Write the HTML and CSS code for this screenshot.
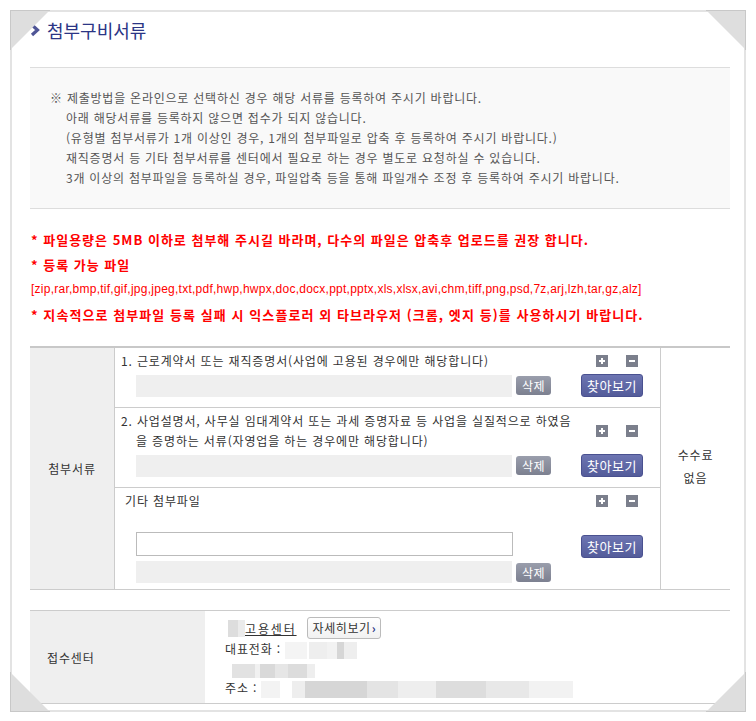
FILE: index.html
```html
<!DOCTYPE html>
<html lang="ko">
<head>
    <meta charset="UTF-8">
    <meta name="viewport" content="width=device-width, initial-scale=1.0">
    <title>첨부구비서류</title>
    <link rel="stylesheet" href="styles.css">
</head>
<body>
<div class="frame">
    <svg class="corner tl" width="40" height="40" viewBox="0 0 40 40"><polygon points="0,0 40,0 0,40" fill="#dedede"/><polyline points="0,40 0,0 40,0" fill="none" stroke="#c8c8c8" stroke-width="2"/></svg>
    <svg class="corner tr" width="40" height="40" viewBox="0 0 40 40"><polygon points="0,0 40,0 40,40" fill="#dedede"/><polyline points="0,0 40,0 40,40" fill="none" stroke="#c8c8c8" stroke-width="2"/></svg>
    <svg class="corner bl" width="40" height="40" viewBox="0 0 40 40"><polygon points="0,0 0,40 40,40" fill="#dedede"/><polyline points="0,0 0,40 40,40" fill="none" stroke="#c8c8c8" stroke-width="2"/></svg>
    <svg class="corner br" width="40" height="40" viewBox="0 0 40 40"><polygon points="40,0 40,40 0,40" fill="#dedede"/><polyline points="40,0 40,40 0,40" fill="none" stroke="#c8c8c8" stroke-width="2"/></svg>

    <h2 class="title">
        <svg class="chev" width="10" height="14" viewBox="0 0 10 14"><polyline points="2,2 7.5,7 2,12" fill="none" stroke="#4f5596" stroke-width="3.2"/></svg>
        첨부구비서류
    </h2>

    <div class="notice">
        <p>※ 제출방법을 온라인으로 선택하신 경우 해당 서류를 등록하여 주시기 바랍니다.</p>
        <p class="sub">아래 해당서류를 등록하지 않으면 접수가 되지 않습니다.</p>
        <p class="sub">(유형별 첨부서류가 1개 이상인 경우, 1개의 첨부파일로 압축 후 등록하여 주시기 바랍니다.)</p>
        <p class="sub">재직증명서 등 기타 첨부서류를 센터에서 필요로 하는 경우 별도로 요청하실 수 있습니다.</p>
        <p class="sub">3개 이상의 첨부파일을 등록하실 경우, 파일압축 등을 통해 파일개수 조정 후 등록하여 주시기 바랍니다.</p>
    </div>

    <div class="warn">
        <p>* 파일용량은 5MB 이하로 첨부해 주시길 바라며, 다수의 파일은 압축후 업로드를 권장 합니다.</p>
        <p>* 등록 가능 파일</p>
        <p class="ext">[zip,rar,bmp,tif,gif,jpg,jpeg,txt,pdf,hwp,hwpx,doc,docx,ppt,pptx,xls,xlsx,avi,chm,tiff,png,psd,7z,arj,lzh,tar,gz,alz]</p>
        <p class="last">* 지속적으로 첨부파일 등록 실패 시 익스플로러 외 타브라우저 (크롬, 엣지 등)를 사용하시기 바랍니다.</p>
    </div>

    <div class="att-table">
        <div class="th">첨부서류</div>
        <div class="docs">
            <div class="doc">
                <div class="doc-head">
                    <p class="doc-title">1. 근로계약서 또는 재직증명서(사업에 고용된 경우에만 해당합니다)</p>
                    <div class="pm">
                        <svg width="12" height="12" viewBox="0 0 12 12"><rect width="12" height="12" fill="#7b7f8c"/><rect x="3" y="5" width="6" height="2" fill="#fff"/><rect x="5" y="3" width="2" height="6" fill="#fff"/></svg>
                        <svg width="12" height="12" viewBox="0 0 12 12"><rect width="12" height="12" fill="#7b7f8c"/><rect x="3" y="5" width="6" height="2" fill="#fff"/></svg>
                    </div>
                </div>
                <div class="file-row">
                    <span class="file-bar"></span>
                    <button class="btn-del">삭제</button>
                    <button class="btn-find">찾아보기</button>
                </div>
            </div>
            <div class="doc">
                <div class="doc-head">
                    <p class="doc-title">2. 사업설명서, 사무실 임대계약서 또는 과세 증명자료 등 사업을 실질적으로 하였음<br>을 증명하는 서류(자영업을 하는 경우에만 해당합니다)</p>
                    <div class="pm">
                        <svg width="12" height="12" viewBox="0 0 12 12"><rect width="12" height="12" fill="#7b7f8c"/><rect x="3" y="5" width="6" height="2" fill="#fff"/><rect x="5" y="3" width="2" height="6" fill="#fff"/></svg>
                        <svg width="12" height="12" viewBox="0 0 12 12"><rect width="12" height="12" fill="#7b7f8c"/><rect x="3" y="5" width="6" height="2" fill="#fff"/></svg>
                    </div>
                </div>
                <div class="file-row">
                    <span class="file-bar"></span>
                    <button class="btn-del">삭제</button>
                    <button class="btn-find">찾아보기</button>
                </div>
            </div>
            <div class="doc doc-etc">
                <div class="doc-head">
                    <p class="doc-title">기타 첨부파일</p>
                    <div class="pm">
                        <svg width="12" height="12" viewBox="0 0 12 12"><rect width="12" height="12" fill="#7b7f8c"/><rect x="3" y="5" width="6" height="2" fill="#fff"/><rect x="5" y="3" width="2" height="6" fill="#fff"/></svg>
                        <svg width="12" height="12" viewBox="0 0 12 12"><rect width="12" height="12" fill="#7b7f8c"/><rect x="3" y="5" width="6" height="2" fill="#fff"/></svg>
                    </div>
                </div>
                <div class="file-row input-row">
                    <input type="text" class="file-input">
                    <button class="btn-find">찾아보기</button>
                </div>
                <div class="file-row bar-row">
                    <span class="file-bar"></span>
                    <button class="btn-del">삭제</button>
                </div>
            </div>
        </div>
        <div class="fee">수수료<br>없음</div>
    </div>

    <div class="center-table">
        <div class="th">접수센터</div>
        <div class="center-info">
            <div class="center-name">
                <span class="blur b-name"></span><a href="#" class="center-link">고용센터</a>
                <button class="btn-more">자세히보기<span class="arr">›</span></button>
            </div>
            <p>대표전화 : <span class="blur b-tel"></span></p>
            <p><span class="blur b-fax"></span></p>
            <p>주소 : <span class="blur b-addr"></span></p>
        </div>
    </div>
</div>
</body>
</html>
```

FILE: styles.css
```css
body { margin: 0; font-family: "Noto Sans CJK KR", "Noto Sans", sans-serif; font-size: 12px; color: #333; background: #fff; letter-spacing: 0.85px; }
p { margin: 0; }
.frame { position: relative; margin: 10px; width: 736px; border: 2px solid #e3e3e3; padding: 0 14px 6px 18px; box-sizing: border-box; }
.corner { position: absolute; }
.corner.tl { top: -2px; left: -2px; }
.corner.tr { top: -2px; right: -2px; }
.corner.bl { bottom: -2px; left: -2px; }
.corner.br { bottom: -2px; right: -2px; }

.title { margin: 0; padding-top: 7px; height: 22px; line-height: 22px; font-size: 18px; font-weight: normal; letter-spacing: 0; color: #2b3585; display: flex; align-items: center; gap: 7px; }
.chev { flex: none; }

.notice { margin-top: 26px; padding: 20px; background: #f9f9f9; border-top: 1px solid #ddd; border-bottom: 1px solid #ddd; color: #555; line-height: 20px; letter-spacing: 0.77px; }
.notice .sub { padding-left: 16px; }

.warn { margin-top: 18px; color: #f00; font-weight: bold; font-size: 13px; line-height: 25px; letter-spacing: 1px; padding-left: 1px; }
.warn .last { letter-spacing: 1.07px; }
.warn .ext { font-family: "Liberation Sans", "Noto Sans CJK KR", sans-serif; font-size: 12px; font-weight: normal; letter-spacing: 0.25px; }

.att-table { margin-top: 19px; display: grid; grid-template-columns: 85px minmax(0, 1fr) 70px; border-top: 2px solid #c8c8c8; border-bottom: 1px solid #ccc; }
.th { background: #efefef; display: flex; align-items: center; justify-content: center; }
.att-table .th { border-right: 1px solid #ccc; }
.fee { border-left: 1px solid #ccc; display: flex; align-items: center; justify-content: center; text-align: center; line-height: 23px; padding-bottom: 6px; }

.doc { padding: 3px 17px 10px 6px; border-bottom: 1px solid #ccc; line-height: 20px; }
.doc:last-child { border-bottom: none; padding-bottom: 6px; }
.doc-head { display: flex; align-items: center; }
.doc-title { flex: 1; min-width: 0; padding-left: 15px; text-indent: -15px; white-space: nowrap; }
.doc-etc .doc-title { padding-left: 4px; text-indent: 0; }
.pm { margin-left: auto; margin-right: 5px; display: flex; gap: 18px; }
.pm svg { display: block; }

.file-row { display: flex; align-items: center; margin-top: 3px; padding-left: 15px; }
.file-bar { width: 376px; height: 22px; background: #efefef; }
.file-input { width: 377px; height: 24px; box-sizing: border-box; border: 1px solid #bbb; margin: 0; padding: 0 4px; }
.input-row { margin-top: 21px; align-items: flex-start; }
.input-row .btn-find { margin-top: 3px; }

.btn-del { margin-left: 4px; width: 35px; height: 19px; padding: 0; border: none; border-radius: 3px; background: linear-gradient(#9a9eac, #7c8090); color: #fff; font-family: inherit; font-size: 12px; line-height: 19px; letter-spacing: 0.5px; }
.btn-find { margin-left: auto; width: 62px; height: 23px; padding: 0; border: 1px solid #4a5190; border-radius: 3px; background: linear-gradient(#6d75b2, #545c9a); color: #fff; font-family: inherit; font-size: 13px; line-height: 21px; letter-spacing: 0.5px; }

.center-table { margin-top: 20px; display: grid; grid-template-columns: 175px 1fr; border-top: 1px solid #ccc; border-bottom: 1px solid #ccc; }
.center-table .th { justify-content: flex-start; padding-left: 17px; }
.center-info { padding: 6px 0 5px 20px; line-height: 19px; }
.center-name { display: flex; align-items: center; height: 22px; }
.center-link { color: #333; text-decoration: underline; letter-spacing: 1.85px; }
.btn-more { margin-left: 10px; height: 22px; padding: 0 4px 0 5px; border: 1px solid #bbb; border-radius: 3px; background: linear-gradient(#fff, #f1f1f1); color: #333; font-family: inherit; font-size: 12px; line-height: 20px; letter-spacing: 0.6px; }
.btn-more .arr { margin-left: 1px; color: #2b3585; font-weight: bold; }

.blur { display: inline-block; height: 17px; vertical-align: middle; }
.b-name { width: 17px; margin-left: 3px; background: linear-gradient(90deg, #ddd 0 60%, #ebebeb 60%); }
.b-tel { width: 72px; background: linear-gradient(90deg, #f4f4f4 0 30%, #fff 30% 34%, #eee 34% 58%, #f2f2f2 58% 72%, #d6d6d6 72% 82%, #eee 82%); }
.b-fax { width: 83px; margin-left: 7px; height: 14px; background: linear-gradient(90deg, #e2e2e2 0 28%, #f1f1f1 28% 34%, #d9d9d9 34% 52%, #e6e6e6 52% 68%, #dcdcdc 68% 90%, #eee 90%); }
.b-addr { width: 312px; background: linear-gradient(90deg, #f3f3f3 0 6%, #fff 6% 10%, #eee 10% 14%, #d6d6d6 14% 34%, #e4e4e4 34% 44%, #eee 44% 56%, #ddd 56% 72%, #e8e8e8 72% 86%, #f2f2f2 86%); }
```
